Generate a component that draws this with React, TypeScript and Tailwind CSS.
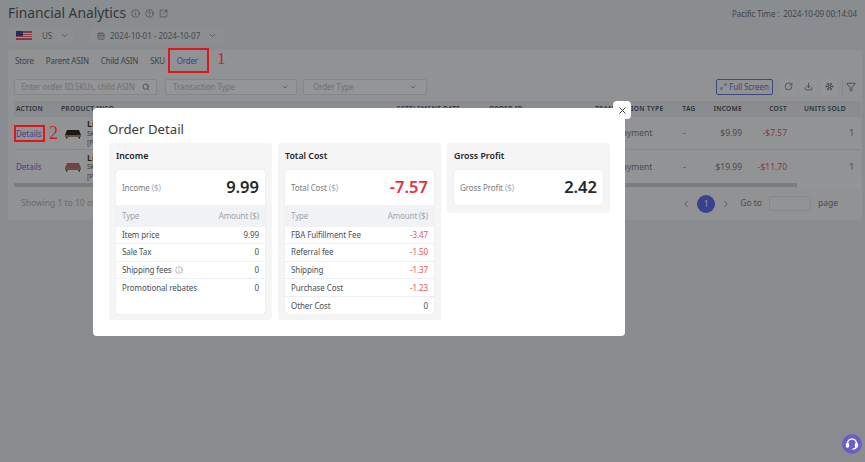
import { CalendarDays, ChevronDown, ChevronLeft, ChevronRight, CircleHelp, Download, Filter, Info, Maximize2, RotateCw, Search, Snowflake, SquareArrowOutUpRight, X } from "lucide-react"

function Bed({ color }: { color: string }) {
  return (
    <svg width="20" height="24" viewBox="0 0 20 24" className="rounded-sm bg-[#f6f7f9]">
      <path d="M4 8h12l2 5H2z" fill={color} />
      <rect x="2" y="13" width="16" height="2" fill="#a58a68" />
      <rect x="3" y="15" width="1.5" height="1.5" fill="#333" />
      <rect x="15.5" y="15" width="1.5" height="1.5" fill="#333" />
    </svg>
  )
}

function Row({ color, income, cost, divider }: { color: string; income: string; cost: string; divider?: boolean }) {
  return (
    <div className={`flex h-[33px] items-center bg-[#f4f6f8] pt-[1px] text-[8.5px] text-[#767c83] ${divider ? "border-b border-[#dfe2e8]" : ""}`}>
      <div className="w-[47px] pl-[2px] text-[8px] text-[#6a74d8]">Details</div>
      <div className="flex w-[336px] items-center gap-[4px] pl-[2px]">
        <Bed color={color} />
        <div className="flex flex-col text-[7px] leading-[9.5px] text-[#666]">
          <span className="text-[9px] font-semibold text-[#333]">Li</span>
          <span>Sk</span>
          <span>[P</span>
        </div>
      </div>
      <div className="w-[198px]" />
      <div className="w-[80px] pl-[22px]">Payment</div>
      <div className="w-[28px] pl-[8px]">-</div>
      <div className="w-[39px] text-right">{income}</div>
      <div className="w-[45px] text-right text-[#e2606c]">{cost}</div>
      <div className="flex-1 pr-[7px] text-right">1</div>
    </div>
  )
}

function Line({ label, value, red, info }: { label: string; value: string; red?: boolean; info?: boolean }) {
  return (
    <div className="flex h-[17.6px] items-center justify-between border-b border-[#eeeff2] px-[6px] text-[8px] tracking-[-0.1px] last:border-b-0">
      <span className="flex items-center gap-[3px] text-[#4a4f57]">
        {label}
        {info && <Info className="size-[8px] text-[#777]" strokeWidth={1.5} />}
      </span>
      <span className={red ? "text-[#e8535b]" : "text-[#4a4f57]"}>{value}</span>
    </div>
  )
}

function Summary({ label, value, red }: { label: string; value: string; red?: boolean }) {
  return (
    <div className="flex h-[35px] items-center justify-between px-[6px]">
      <span className="text-[8px] tracking-[-0.1px] text-[#777c84]">
        {label} <span className="text-[#a8acb3]">($)</span>
      </span>
      <span className={`text-[16.5px] font-semibold ${red ? "text-[#e5323e]" : "text-[#24272c]"}`}>{value}</span>
    </div>
  )
}

function Card({ title, label, value, red, lines }: { title: string; label: string; value: string; red?: boolean; lines?: { label: string; value: string; red?: boolean; info?: boolean }[] }) {
  return (
    <div className={`w-[163px] rounded-[3px] bg-[#f5f5f6] px-[7px] pb-[6px] ${lines ? "h-[177px]" : "h-[70px]"}`}>
      <div className="flex h-[27px] items-center pt-[1px] text-[8.8px] font-semibold text-[#1f2226]">{title}</div>
      <div className="overflow-hidden rounded-[3px] bg-white shadow-[0_0_1px_rgba(0,0,0,0.18)]">
        <Summary label={label} value={value} red={red} />
        {lines && (
          <div className="h-[109px]">
            <div className="flex h-[21.5px] items-center justify-between bg-[#f1f2f5] px-[6px] text-[8px] tracking-[-0.15px] text-[#a0a4ab]">
              <span>Type</span>
              <span>Amount ($)</span>
            </div>
            {lines.map((l) => (
              <Line key={l.label} {...l} />
            ))}
          </div>
        )}
      </div>
    </div>
  )
}

export default function App() {
  return (
    <div className="relative h-[462px] w-[865px] overflow-hidden bg-[#e6ebef] font-['Noto_Sans','Open_Sans',sans-serif]">
      <div className="flex h-[50px] flex-col px-[8px]">
        <div className="flex h-[27px] items-center justify-between">
          <div className="flex items-center gap-[5px] text-[#555d66]">
            <h1 className="text-[13.8px]">Financial Analytics</h1>
            <Info className="size-[9px]" strokeWidth={1.5} />
            <CircleHelp className="size-[9px]" strokeWidth={1.5} />
            <SquareArrowOutUpRight className="size-[9px]" strokeWidth={1.5} />
          </div>
          <div className="text-[8px] tracking-[-0.1px] text-[#6e747b]">Pacific Time :&nbsp; 2024-10-09 00:14:04</div>
        </div>
        <div className="flex h-[17px] items-center text-[8px] text-[#767c83]">
          <div className="flex h-[17px] w-[66px] items-center rounded-sm bg-[#e9edf1] pl-[8px]">
            <svg width="16" height="9" viewBox="0 0 16 9" className="mr-[10px]">
              <rect width="16" height="9" fill="#d8606d" />
              <rect y="2" width="16" height="1" fill="#fff" />
              <rect y="4" width="16" height="1" fill="#fff" />
              <rect y="6" width="16" height="1" fill="#fff" />
              <rect width="7" height="5" fill="#3d4ea0" />
            </svg>
            US
            <ChevronDown className="ml-[8px] size-[9px]" />
          </div>
          <div className="ml-[16px] flex h-[17px] w-[135px] items-center rounded-sm bg-[#e9edf1] pl-[7px]">
            <CalendarDays className="mr-[5px] size-[8px]" />
            2024-10-01 - 2024-10-07
            <ChevronDown className="ml-[8px] size-[9px]" />
          </div>
        </div>
      </div>

      <div className="ml-[8px] mr-[3px] flex h-[170px] flex-col rounded-[3px] bg-[#f0f3f6] pl-[6px] pr-[1px]">
        <div className="flex h-[22px] items-center gap-[12px] pl-[1px] text-[8px] tracking-[-0.2px] text-[#6b7178]">
          <span>Store</span>
          <span>Parent ASIN</span>
          <span>Child ASIN</span>
          <span>SKU</span>
          <span className="relative flex h-[22px] items-center text-[#6a74d8]">
            Order
            <span className="absolute bottom-0 left-0 h-[1.5px] w-full bg-[#6a74d8]" />
          </span>
        </div>
        <div className="flex h-[29px] items-center">
          <div className="flex h-[16px] w-[143px] items-center justify-between rounded-[2px] border border-[#dde1e6] bg-[#f6f8fa] px-[6px] text-[8px] tracking-[-0.1px] text-[#bcc0c5]">
            Enter order ID,SKUs, child ASIN
            <Search className="size-[8px] text-[#555]" />
          </div>
          <div className="ml-[8px] flex h-[16px] w-[132px] items-center justify-between rounded-[2px] border border-[#dde1e6] bg-[#f6f8fa] px-[7px] text-[8px] tracking-[-0.1px] text-[#bcc0c5]">
            Transaction Type
            <ChevronDown className="size-[8px] text-[#666]" />
          </div>
          <div className="ml-[6px] flex h-[16px] w-[124px] items-center justify-between rounded-[2px] border border-[#dde1e6] bg-[#f6f8fa] px-[9px] text-[8px] tracking-[-0.1px] text-[#bcc0c5]">
            Order Type
            <ChevronDown className="size-[8px] text-[#666]" />
          </div>
          <div className="ml-auto mr-[3px] flex items-center text-[#6b7178]">
            <div className="flex h-[16px] w-[57px] items-center justify-center gap-[2px] rounded-[2px] border border-[#6a74d8] text-[8px] tracking-[-0.1px] text-[#6a74d8]">
              <Maximize2 className="size-[7px]" />
              Full Screen
            </div>
            <div className="ml-[7px] flex size-[16px] items-center justify-center rounded-[2px] bg-[#f6f8fa]"><RotateCw className="size-[9px]" /></div>
            <div className="ml-[4px] flex size-[16px] items-center justify-center rounded-[2px] bg-[#f6f8fa]"><Download className="size-[9px]" /></div>
            <div className="ml-[5px] flex size-[16px] items-center justify-center rounded-[2px] bg-[#f6f8fa]"><Snowflake className="size-[9px]" /></div>
            <div className="ml-[5px] flex size-[16px] items-center justify-center border-l border-[#dde1e6]"><Filter className="size-[10px]" /></div>
          </div>
        </div>

        <div className="flex h-[16px] items-center whitespace-nowrap rounded-t-[2px] bg-[#e7eaf0] text-[6.6px] font-semibold tracking-[0.3px] text-[#4d535b]">
          <div className="w-[47px] pl-[2px]">ACTION</div>
          <div className="w-[336px]">PRODUCT INFO</div>
          <div className="w-[92px]">SETTLEMENT DATE</div>
          <div className="w-[106px]">ORDER ID</div>
          <div className="w-[80px]">TRANSACTION TYPE</div>
          <div className="w-[28px] text-center">TAG</div>
          <div className="w-[39px] text-right">INCOME</div>
          <div className="w-[45px] text-right">COST</div>
          <div className="flex-1 pr-[15px] text-right">UNITS SOLD</div>
        </div>
        <Row color="#2b2b2b" income="$9.99" cost="-$7.57" divider />
        <Row color="#c96a7c" income="$19.99" cost="-$11.70" />
        <div className="h-[4px] bg-[#f6f8fa]">
          <div className="h-[4px] w-[783px] bg-[#cdd1d6]" />
        </div>

        <div className="flex flex-1 items-center justify-between pl-[7px] text-[8.5px] text-[#b0b4ba]">
          <span>Showing 1 to 10 of</span>
          <div className="flex items-center pr-[23px] text-[#767c83]">
            <ChevronLeft className="size-[10px] text-[#6a74d8]" />
            <span className="mx-[6px] flex size-[18px] items-center justify-center rounded-full bg-[#616bf0] text-[8px] text-white">1</span>
            <ChevronRight className="size-[10px] text-[#6a74d8]" />
            <span className="ml-[9px]">Go to</span>
            <span className="mx-[7px] h-[15px] w-[42px] rounded-[2px] border border-[#e0e3e8] bg-[#f4f6f8]" />
            <span>page</span>
          </div>
        </div>
      </div>

      <div className="absolute inset-0 bg-black/40 backdrop-blur-[0.4px]" />

      <div className="absolute bottom-[8px] right-[3px] flex size-[20px] items-center justify-center rounded-full bg-[#6a5fc6]">
        <svg width="14" height="14" viewBox="0 0 14 14" fill="none" stroke="#fff" strokeWidth="1.4">
          <path d="M2.5 9V6.5a4.5 4.5 0 0 1 9 0V9" />
          <rect x="1.5" y="6.5" width="2" height="3.5" rx="1" fill="#fff" />
          <rect x="10.5" y="6.5" width="2" height="3.5" rx="1" fill="#fff" />
          <path d="M11 10c0 1.5-1.5 2-3.5 2" />
        </svg>
      </div>

      <div className="absolute left-[14px] top-[125px] h-[17px] w-[31px] border-2 border-[#e3141c]" />
      <div className="absolute left-[49px] top-[123px] font-['Liberation_Serif',serif] text-[18px] leading-[20px] text-[#e3141c]">2</div>
      <div className="absolute left-[168px] top-[48px] h-[25px] w-[41px] border-2 border-[#e3141c]" />
      <div className="absolute left-[217px] top-[49px] font-['Liberation_Serif',serif] text-[17px] leading-[20px] text-[#e3141c]">1</div>

      <div className="absolute left-[93px] top-[108px] h-[228px] w-[532px] rounded-[4px] bg-white">
        <div className="flex h-[35px] items-end pb-[3px] pl-[15px] text-[13.2px] text-[#3a3d42]">Order Detail</div>
        <div className="flex items-start gap-[6px] pl-[16px]">
          <Card
            title="Income"
            label="Income"
            value="9.99"
            lines={[
              { label: "Item price", value: "9.99" },
              { label: "Sale Tax", value: "0" },
              { label: "Shipping fees", value: "0", info: true },
              { label: "Promotional rebates", value: "0" },
            ]}
          />
          <Card
            title="Total Cost"
            label="Total Cost"
            value="-7.57"
            red
            lines={[
              { label: "FBA Fulfillment Fee", value: "-3.47", red: true },
              { label: "Referral fee", value: "-1.50", red: true },
              { label: "Shipping", value: "-1.37", red: true },
              { label: "Purchase Cost", value: "-1.23", red: true },
              { label: "Other Cost", value: "0" },
            ]}
          />
          <Card title="Gross Profit" label="Gross Profit" value="2.42" />
        </div>
      </div>
      <button className="absolute left-[613px] top-[101px] flex size-[18px] items-center justify-center rounded-[4px] bg-white text-[#333]">
        <X className="size-[11px]" />
      </button>
    </div>
  )
}
